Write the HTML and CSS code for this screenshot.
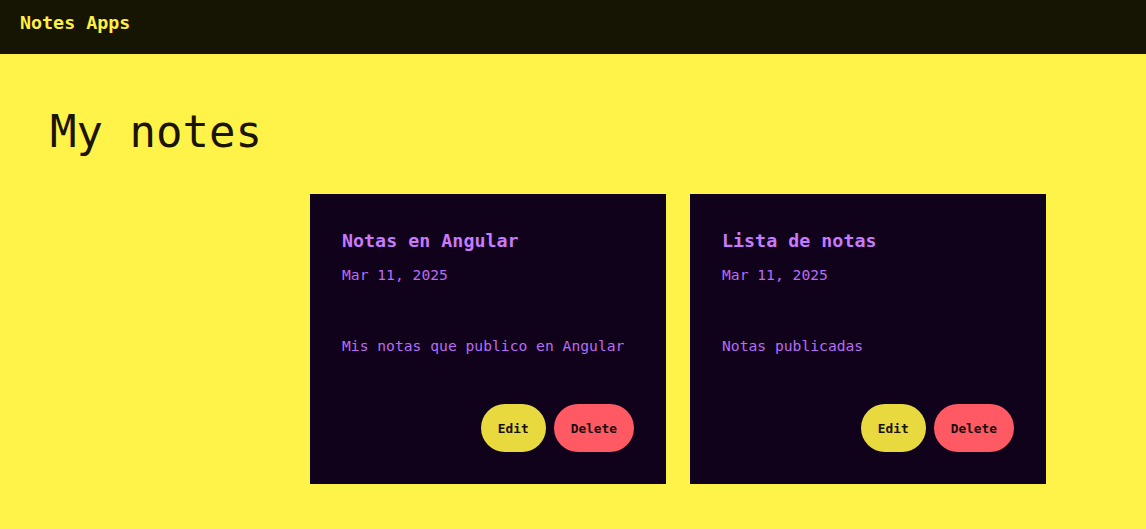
FILE: index.html
```html
<!DOCTYPE html>
<html lang="en">
<head>
<meta charset="utf-8">
<title>Notes Apps</title>
<link rel="stylesheet" href="styles.css">
</head>
<body>
<header class="topbar">
  <span class="brand">Notes Apps</span>
</header>
<main class="page">
  <h1 class="page-title">My notes</h1>
  <section class="notes">
    <article class="note">
      <h2 class="note-title">Notas en Angular</h2>
      <p class="note-date">Mar 11, 2025</p>
      <p class="note-body">Mis notas que publico en Angular</p>
      <div class="note-actions">
        <button class="btn btn-edit">Edit</button>
        <button class="btn btn-delete">Delete</button>
      </div>
    </article>
    <article class="note">
      <h2 class="note-title">Lista de notas</h2>
      <p class="note-date">Mar 11, 2025</p>
      <p class="note-body">Notas publicadas</p>
      <div class="note-actions">
        <button class="btn btn-edit">Edit</button>
        <button class="btn btn-delete">Delete</button>
      </div>
    </article>
  </section>
</main>
</body>
</html>
```
FILE: styles.css
```css
* { box-sizing: border-box; }
html, body {
  margin: 0;
  padding: 0;
}
body {
  background: #fff34a;
  font-family: "DejaVu Sans Mono", "Liberation Mono", monospace;
  min-height: 529px;
}
.topbar {
  height: 54px;
  background: #161403;
  padding: 11px 20px 0;
}
.brand {
  display: block;
  color: #ffee44;
  font-weight: bold;
  font-size: 18.33px;
  line-height: 24px;
}
.page {
  padding: 52px 50px 0;
}
.page-title {
  margin: 0;
  font-weight: normal;
  font-size: 44px;
  line-height: 52px;
  color: #1a1400;
}
.notes {
  display: flex;
  gap: 24px;
  margin-top: 36px;
  padding-left: 260px;
}
.note {
  width: 356px;
  height: 290px;
  background: #10021a;
  padding: 32px;
  display: flex;
  flex-direction: column;
}
.note-title {
  margin: 3px 0 0;
  font-size: 18.33px;
  line-height: 24px;
  font-weight: bold;
  color: #c77aff;
}
.note-date {
  margin: 12px 0 0;
  font-size: 14.67px;
  line-height: 20px;
  color: #b86cf5;
}
.note-body {
  margin: 51px 0 0;
  font-size: 14.67px;
  line-height: 20px;
  color: #b86cf5;
}
.note-actions {
  margin-top: auto;
  display: flex;
  justify-content: flex-end;
  gap: 8px;
}
.btn {
  height: 48px;
  padding: 0 17px;
  border: none;
  border-radius: 24px;
  font-family: inherit;
  font-size: 12.83px;
  font-weight: bold;
  color: #1a1010;
}
.btn-edit { background: #e8da3e; }
.btn-delete { background: #ff5a63; }
```
